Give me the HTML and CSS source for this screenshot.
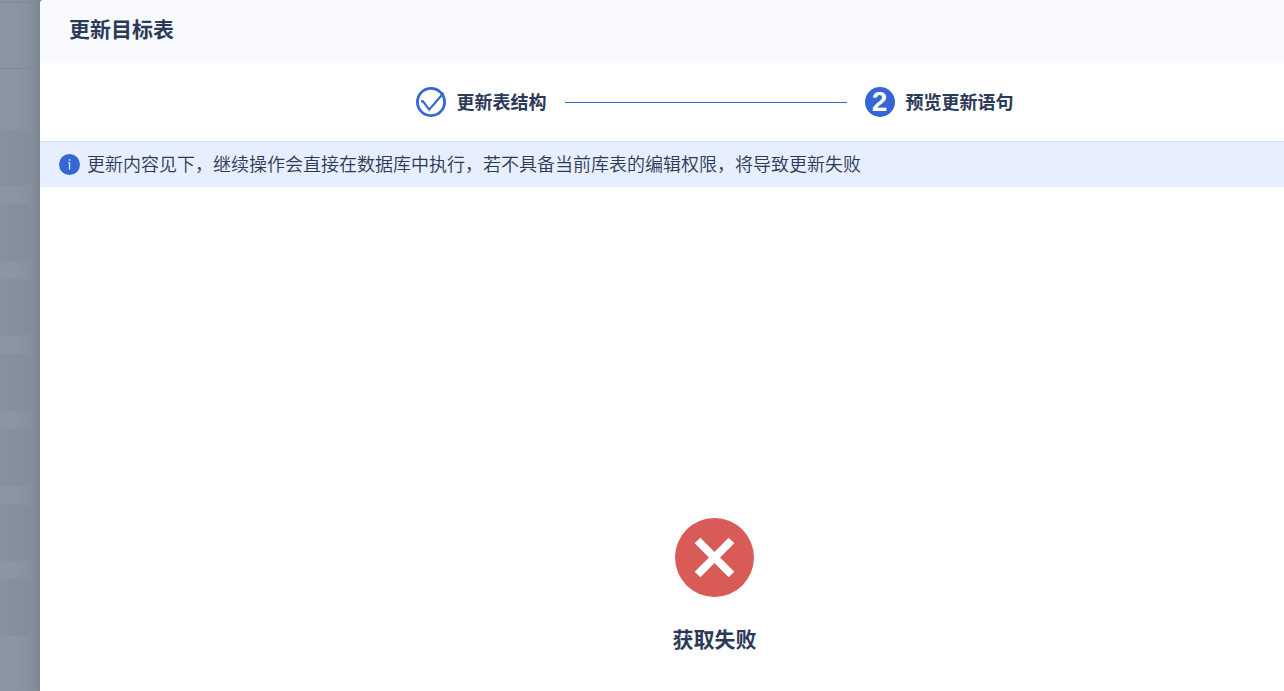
FILE: index.html
```html
<!DOCTYPE html>
<html lang="zh-CN">
<head>
<meta charset="utf-8">
<title>更新目标表</title>
<link rel="stylesheet" href="styles.css">
</head>
<body>
<div class="page">
  <aside class="backdrop">
    <div class="backdrop-tab"></div>
    <div class="backdrop-bar"></div>
    <div class="backdrop-list">
      <div class="backdrop-card"></div>
      <div class="backdrop-card"></div>
      <div class="backdrop-card"></div>
      <div class="backdrop-card"></div>
      <div class="backdrop-card"></div>
      <div class="backdrop-card"></div>
      <div class="backdrop-card"></div>
    </div>
  </aside>
  <main class="dialog" role="dialog" aria-labelledby="dialog-title">
    <header class="dialog-header">
      <h1 class="dialog-title" id="dialog-title">更新目标表</h1>
    </header>
    <ol class="steps">
      <li class="step">
        <svg class="step-icon" viewBox="0 0 30 30" aria-hidden="true">
          <circle cx="15" cy="15" r="13.6" fill="none" stroke="#3665d6" stroke-width="2.8"/>
          <path d="M5 14.4 H7 L13.2 22.6 L27.6 6" fill="none" stroke="#3665d6" stroke-width="2.2"/>
        </svg>
        <span class="step-label">更新表结构</span>
      </li>
      <li class="step-line" role="presentation"></li>
      <li class="step">
        <span class="step-number">2</span>
        <span class="step-label">预览更新语句</span>
      </li>
    </ol>
    <div class="notice">
      <svg class="notice-icon" viewBox="0 0 21 21" aria-hidden="true">
        <circle cx="10.5" cy="10.5" r="10.5" fill="#3665d6"/>
        <path d="M9.8 5.2h1.6v1.6h-1.6zM9 8.3h2.2v7.5h-1.3v-6.5H9z" fill="#dfe8fc"/>
      </svg>
      <p class="notice-text">更新内容见下，继续操作会直接在数据库中执行，若不具备当前库表的编辑权限，将导致更新失败</p>
    </div>
    <section class="result">
      <svg class="result-icon" viewBox="0 0 79 79" aria-hidden="true">
        <circle cx="39.5" cy="39.5" r="39.5" fill="#d85b57"/>
        <path d="M22.5 22.5 L56.5 56.5 M56.5 22.5 L22.5 56.5" stroke="#fff" stroke-width="8"/>
      </svg>
      <p class="result-text">获取失败</p>
    </section>
  </main>
</div>
</body>
</html>
```

FILE: styles.css
```css
* {
  box-sizing: border-box;
}

body {
  margin: 0;
  color: #2b3a58;
  background: #8b95a4;
  font-family: "Noto Sans CJK SC", sans-serif;
}

h1,
p,
ol {
  margin: 0;
  padding: 0;
}

.page {
  display: flex;
  height: 100vh;
  overflow: hidden;
}

.backdrop {
  flex: 0 0 40px;
  background: linear-gradient(to right, #8b95a4 0, #8b95a4 14px, #87929c 28px, #7e8995 40px);
}

.backdrop-tab {
  height: 3px;
  border-bottom: 1px solid #7c889b;
}

.backdrop-bar {
  height: 66px;
  border-bottom: 1px solid #7c889b;
}

.backdrop-list {
  display: flex;
  flex-direction: column;
  gap: 18px;
  padding: 60px 8px 0 0;
}

.backdrop-card {
  height: 57px;
  border-radius: 0 9px 9px 0;
  background: linear-gradient(to right, #87919f, #828c9a);
}

.dialog {
  display: flex;
  flex: 1;
  flex-direction: column;
  min-width: 0;
  overflow: hidden;
  background: #fff;
  border-top-left-radius: 4px;
  box-shadow: 0 0 4px rgba(60, 75, 95, 0.08);
}

.dialog-header {
  display: flex;
  align-items: center;
  height: 63px;
  padding: 0 29px 8px;
  background: #f8fafe;
}

.dialog-title,
.result-text {
  font-size: 21px;
  font-weight: 700;
  line-height: 30px;
}

.steps {
  display: flex;
  align-items: center;
  justify-content: center;
  gap: 18px;
  height: 78px;
  padding-left: 105px;
  list-style: none;
}

.step {
  display: flex;
  align-items: center;
  gap: 11px;
  font-size: 18px;
  font-weight: 700;
  line-height: 26px;
}

.step-label {
  padding-bottom: 2px;
}

.step-icon,
.step-number {
  display: block;
  width: 30px;
  height: 30px;
}

.step-number {
  border-radius: 50%;
  color: #fff;
  background: #3665d6;
  font-family: "Liberation Sans", Arial, sans-serif;
  font-size: 28px;
  line-height: 30px;
  text-align: center;
}

.step-line {
  width: 282px;
  height: 1px;
  background: #3665d6;
}

.notice {
  display: flex;
  align-items: center;
  gap: 7px;
  height: 46px;
  padding: 0 19px;
  border-top: 1px solid #d5dde6;
  background: #e7eefe;
}

.notice-icon {
  flex: none;
  width: 21px;
  height: 21px;
}

.notice-text {
  padding-bottom: 4px;
  font-size: 18px;
  font-weight: 350;
  line-height: 26px;
}

.result {
  display: flex;
  flex: 1;
  flex-direction: column;
  align-items: center;
  justify-content: flex-end;
  gap: 26px;
  padding: 0 0 38px 105px;
}

.result-icon {
  width: 79px;
  height: 79px;
}
```
